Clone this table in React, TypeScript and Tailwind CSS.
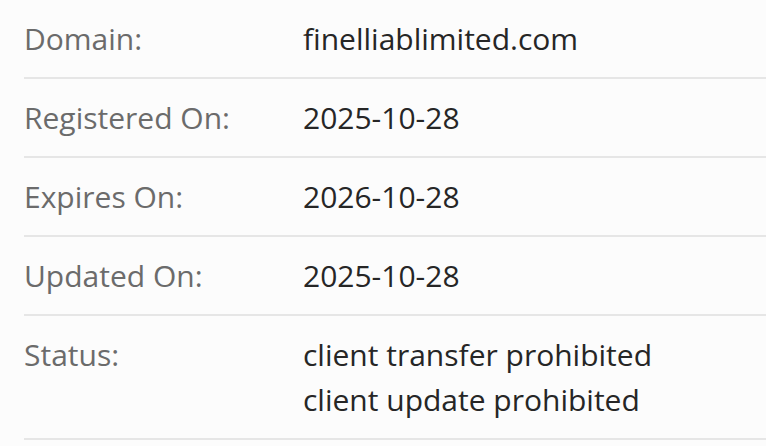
import React from 'react';

const ROWS: { label: string; values: string[] }[] = [
  { label: 'Domain:', values: ['finelliablimited.com'] },
  { label: 'Registered On:', values: ['2025-10-28'] },
  { label: 'Expires On:', values: ['2026-10-28'] },
  { label: 'Updated On:', values: ['2025-10-28'] },
  { label: 'Status:', values: ['client transfer prohibited', 'client update prohibited'] },
];

export default function App() {
  return (
    <div className="w-[766px] h-[446px] overflow-hidden bg-[#fcfcfc] pl-[24px] font-['Open_Sans',sans-serif] text-[30px] leading-[45px]">
      {ROWS.map(row => (
        <div key={row.label} className="flex py-4 border-b-2 border-[#e6e6e6]">
          <div className="w-[279px] shrink-0 text-[#6b6b6b]">{row.label}</div>
          <div className="flex flex-col text-[#262626]">
            {row.values.map(v => (
              <span key={v}>{v}</span>
            ))}
          </div>
        </div>
      ))}
    </div>
  );
}
